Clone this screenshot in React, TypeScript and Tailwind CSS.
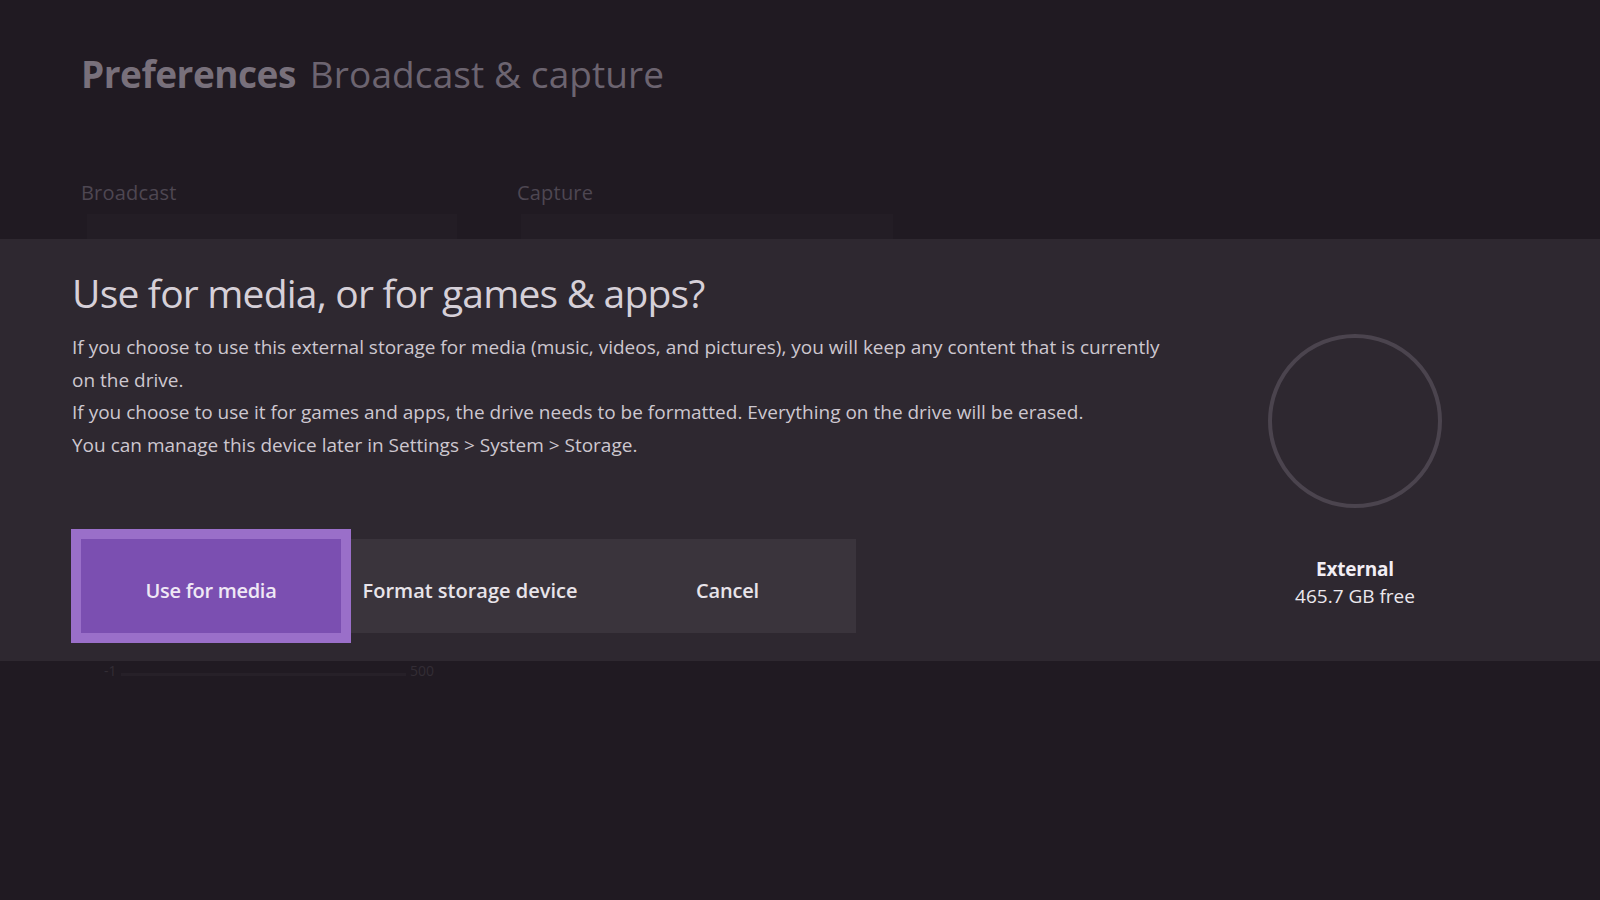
import React from "react";

const font = { fontFamily: '"Open Sans", "Noto Sans", "Liberation Sans", sans-serif' };

export default function App() {
  return (
    <div
      className="w-[1600px] h-[900px] bg-[#201a22] flex flex-col overflow-hidden"
      style={font}
    >
      {/* Background page header */}
      <div className="h-[239px] shrink-0 flex flex-col pl-[81px] overflow-hidden">
        <h1 className="mt-[50px] text-[37px] leading-[48px] flex gap-[14px]">
          <span className="font-bold text-[#78707b] tracking-[-0.5px]">Preferences</span>
          <span className="text-[#6c6470] tracking-[0.1px]">Broadcast &amp; capture</span>
        </h1>
        <div className="mt-[82px] flex gap-[61px]">
          <div className="flex flex-col w-[375px]">
            <span className="text-[20px] leading-[26px] text-[#4e4752] tracking-[0.2px]">Broadcast</span>
            <div className="mt-[8px] ml-[6px] h-[60px] w-[370px] bg-[#231d25]" />
          </div>
          <div className="flex flex-col w-[375px]">
            <span className="text-[20px] leading-[26px] text-[#4e4752] tracking-[0.2px]">Capture</span>
            <div className="mt-[8px] ml-[4px] h-[60px] w-[372px] bg-[#231d25]" />
          </div>
        </div>
      </div>

      {/* Dialog band */}
      <div className="h-[422px] shrink-0 bg-[#2e2830] flex pl-[72px]">
        <div className="flex flex-col w-[1130px]">
          <h2 className="mt-[30px] text-[39px] leading-[48px] text-[#d6d0d8] tracking-[-0.8px]">
            Use for media, or for games &amp; apps?
          </h2>
          <p className="mt-[14px] text-[19px] leading-[32.5px] text-[#cdc7cf] tracking-[0px] whitespace-nowrap">
            If you choose to use this external storage for media (music, videos, and pictures), you will keep any content that is currently
            <br />
            on the drive.
            <br />
            If you choose to use it for games and apps, the drive needs to be formatted. Everything on the drive will be erased.
            <br />
            You can manage this device later in Settings &gt; System &gt; Storage.
          </p>
          <div className="mt-[78px] ml-[9px] flex w-[775px] h-[94px] bg-[#3a343c]">
            <button className="w-[260px] h-full pt-[10px] bg-[#7b4fb1] outline-[10px] outline-solid outline-[#9a6fc9] text-[20px] font-semibold text-[#efe8f5] tracking-[-0.3px]">
              Use for media
            </button>
            <button className="w-[258px] h-full pt-[10px] text-[20px] font-semibold text-[#e8e4ea] tracking-[0px]">
              Format storage device
            </button>
            <button className="w-[257px] h-full pt-[10px] text-[20px] font-semibold text-[#e8e4ea] tracking-[-0.2px]">
              Cancel
            </button>
          </div>
        </div>
        <div className="ml-[23px] w-[260px] flex flex-col items-center">
          <div className="mt-[95px] w-[174px] h-[174px] rounded-full border-[4px] border-[#4b444e]" />
          <div className="mt-[48px] text-[19px] leading-[27px] font-bold text-[#f2eef4] tracking-[-0.2px]">External</div>
          <div className="text-[19px] leading-[27px] text-[#ece8ee] tracking-[0px]">465.7 GB free</div>
        </div>
      </div>

      {/* Ghost content below */}
      <div className="flex-1 pl-[104px] pt-[2px]">
        <div className="flex items-start w-[330px] gap-[4px]">
          <span className="text-[14px] leading-[16px] text-[#332d35]">-1</span>
          <div className="mt-[10px] flex-1 h-[3px] bg-[#262028]" />
          <span className="text-[14px] leading-[16px] text-[#332d35]">500</span>
        </div>
      </div>
    </div>
  );
}
